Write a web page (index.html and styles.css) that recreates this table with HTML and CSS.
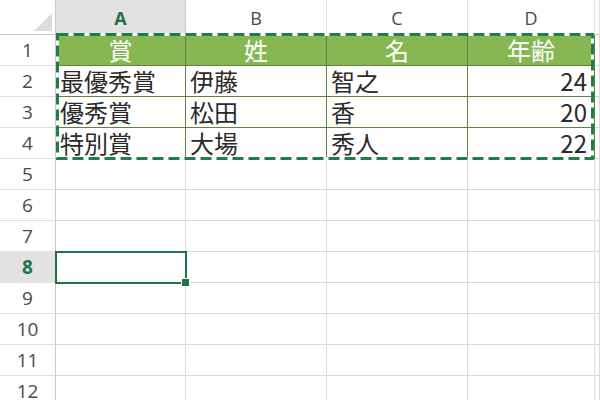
FILE: index.html
```html
<!DOCTYPE html>
<html lang="ja">
<head>
<meta charset="utf-8">
<link rel="stylesheet" href="styles.css">
</head>
<body>
<div class="sheet">
  <div class="grid">
    <div class="corner"><span class="tri"></span></div>
    <div class="ch ch-sel">A</div>
    <div class="ch">B</div>
    <div class="ch">C</div>
    <div class="ch">D</div>
    <div class="ch ch-last"></div>

    <div class="rh">1</div>
    <div class="c t th">賞</div>
    <div class="c t th">姓</div>
    <div class="c t th">名</div>
    <div class="c t th">年齢</div>
    <div class="c"></div>

    <div class="rh">2</div>
    <div class="c t">最優秀賞</div>
    <div class="c t">伊藤</div>
    <div class="c t">智之</div>
    <div class="c t num">24</div>
    <div class="c"></div>

    <div class="rh">3</div>
    <div class="c t">優秀賞</div>
    <div class="c t">松田</div>
    <div class="c t">香</div>
    <div class="c t num">20</div>
    <div class="c"></div>

    <div class="rh">4</div>
    <div class="c t">特別賞</div>
    <div class="c t">大場</div>
    <div class="c t">秀人</div>
    <div class="c t num">22</div>
    <div class="c"></div>

    <div class="rh">5</div><div class="c"></div><div class="c"></div><div class="c"></div><div class="c"></div><div class="c"></div>
    <div class="rh">6</div><div class="c"></div><div class="c"></div><div class="c"></div><div class="c"></div><div class="c"></div>
    <div class="rh">7</div><div class="c"></div><div class="c"></div><div class="c"></div><div class="c"></div><div class="c"></div>
    <div class="rh rh-sel">8</div><div class="c"></div><div class="c"></div><div class="c"></div><div class="c"></div><div class="c"></div>
    <div class="rh">9</div><div class="c"></div><div class="c"></div><div class="c"></div><div class="c"></div><div class="c"></div>
    <div class="rh">10</div><div class="c"></div><div class="c"></div><div class="c"></div><div class="c"></div><div class="c"></div>
    <div class="rh">11</div><div class="c"></div><div class="c"></div><div class="c"></div><div class="c"></div><div class="c"></div>
    <div class="rh">12</div><div class="c"></div><div class="c"></div><div class="c"></div><div class="c"></div><div class="c"></div>
  </div>

  <svg class="ants" width="539" height="128" viewBox="0 0 539 128">
    <rect x="1.5" y="1.5" width="535" height="124" fill="none" stroke="#ffffff" stroke-width="3"/>
    <rect x="1.5" y="1.5" width="535" height="124" fill="none" stroke="#1e7f4c" stroke-width="3" stroke-dasharray="11 5"/>
  </svg>

  <div class="sel"><span class="handle"></span></div>
</div>
</body>
</html>
```

FILE: styles.css
```css
html, body {
  margin: 0;
  padding: 0;
  background: #ffffff;
}

body {
  width: 600px;
  height: 400px;
  overflow: hidden;
}

.sheet {
  position: relative;
  width: 600px;
  height: 400px;
  overflow: hidden;
}

.grid {
  display: grid;
  grid-template-columns: 56px 130px 141px 141px 127px 1fr;
  grid-template-rows: 35px repeat(12, 31px);
}

.grid > div {
  box-sizing: border-box;
}

.corner {
  position: relative;
  background: #ffffff;
  border-right: 1px solid #c8c8c8;
  border-bottom: 1px solid #c8c8c8;
}

.tri {
  position: absolute;
  right: 3px;
  bottom: 3px;
  width: 0;
  height: 0;
  border-left: 18px solid transparent;
  border-bottom: 18px solid #dcdcdc;
}

.ch {
  display: flex;
  align-items: center;
  justify-content: center;
  font-family: "Open Sans", "Noto Sans", sans-serif;
  font-size: 18px;
  color: #4a4a4a;
  background: #ffffff;
  border-right: 1px solid #e0e0e0;
  border-bottom: 1px solid #c8c8c8;
  padding-top: 2px;
}

.ch-sel {
  background: #e2e2e2;
  color: #217346;
  font-weight: 700;
  border-right: 1px solid #c8c8c8;
  border-bottom: 2px solid #217346;
}

.rh {
  display: flex;
  align-items: center;
  justify-content: center;
  font-family: "Open Sans", "Noto Sans", sans-serif;
  font-size: 19px;
  color: #4a4a4a;
  background: #ffffff;
  border-right: 1px solid #c8c8c8;
  border-bottom: 1px solid #e0e0e0;
}

.rh-sel {
  background: #e2e2e2;
  color: #217346;
  font-weight: 700;
}

.c {
  border-right: 1px solid #dadada;
  border-bottom: 1px solid #dadada;
}

.t {
  font-family: "Noto Sans CJK JP", sans-serif;
  font-size: 24px;
  line-height: 30px;
  color: #2a2a2a;
  padding-left: 4px;
  white-space: nowrap;
  border-right-color: #62803f;
  border-bottom-color: #62803f;
}

.th {
  background: #86b752;
  color: #ffffff;
  text-align: center;
  padding-left: 0;
}

.num {
  text-align: right;
  padding-right: 7px;
  padding-left: 0;
}

.ants {
  position: absolute;
  left: 56px;
  top: 33px;
  display: block;
}

.sel {
  position: absolute;
  left: 55px;
  top: 251px;
  width: 132px;
  height: 33px;
  box-sizing: border-box;
  border: 2px solid #217346;
}

.handle {
  position: absolute;
  right: -5px;
  bottom: -5px;
  width: 7px;
  height: 7px;
  background: #217346;
  border: 1px solid #ffffff;
}
```
